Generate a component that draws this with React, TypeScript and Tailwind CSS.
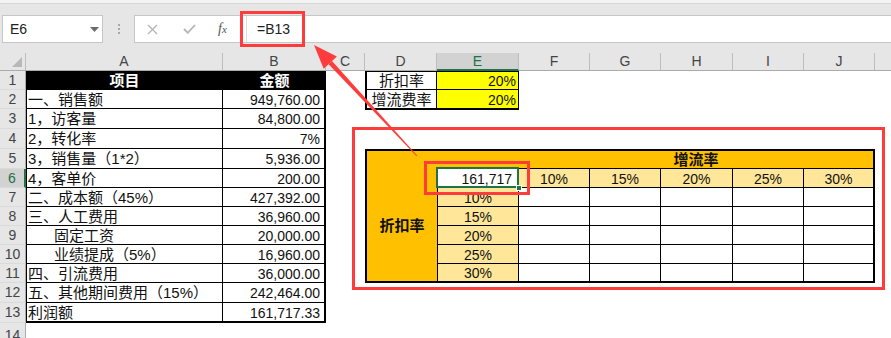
import React from "react";

const FONT = "font-['Liberation_Sans','Noto_Sans_CJK_SC',sans-serif]";

const COLS = ["A", "B", "C", "D", "E", "F", "G", "H", "I", "J"];
const COL_W = ["w-[197px]", "w-[103px]", "w-[39px]", "w-[72px]", "w-[82px]", "w-[71px]", "w-[71px]", "w-[72px]", "w-[71px]", "w-[71px]"];
// row 1..13 heights, row 14 takes the rest
const ROW_H = ["h-[19px]", "h-[19px]", "h-[20px]", "h-[20px]", "h-[20px]", "h-[19px]", "h-[19px]", "h-[19px]", "h-[19px]", "h-[19px]", "h-[19px]", "h-[20px]", "h-[20px]"];

const REPORT: { label: string; value: string; indent?: boolean }[] = [
  { label: "一、销售额", value: "949,760.00" },
  { label: "1，访客量", value: "84,800.00" },
  { label: "2，转化率", value: "7%" },
  { label: "3，销售量（1*2）", value: "5,936.00" },
  { label: "4，客单价", value: "200.00" },
  { label: "二、成本额（45%）", value: "427,392.00" },
  { label: "三、人工费用", value: "36,960.00" },
  { label: "固定工资", value: "20,000.00", indent: true },
  { label: "业绩提成（5%）", value: "16,960.00", indent: true },
  { label: "四、引流费用", value: "36,000.00" },
  { label: "五、其他期间费用（15%）", value: "242,464.00" },
  { label: "利润额", value: "161,717.33" },
];

const RATES = ["10%", "15%", "20%", "25%", "30%"];

function Toolbar() {
  return (
    <div className="h-[53px] bg-[#e6e6e6]">
      <div className="h-[4px] border-b border-[#d6d6d6] bg-[#f3f3f3]" />
      <div className="flex pt-[11px]">
        {/* name box */}
        <div className="ml-[2px] flex h-[28px] w-[101px] items-center justify-between border border-[#c6c6c6] bg-white pl-[7px] pr-[3px] text-[14px] text-[#222]">
          <span>E6</span>
          <svg width="9" height="5" viewBox="0 0 9 5">
            <polygon points="0,0 9,0 4.5,5" fill="#6b6b6b" />
          </svg>
        </div>
        <div className="ml-[14px] flex h-[28px] w-[3px] flex-col items-center justify-center gap-[2px]">
          <span className="h-[2px] w-[2px] bg-[#a8a8a8]" />
          <span className="h-[2px] w-[2px] bg-[#a8a8a8]" />
          <span className="h-[2px] w-[2px] bg-[#a8a8a8]" />
        </div>
        {/* formula bar */}
        <div className="ml-[14px] flex h-[28px] flex-1 border-y border-l border-[#c6c6c6] bg-white">
          <div className="flex w-[112px] items-center border-r border-[#dcdcdc]">
            <svg className="ml-[12px]" width="11" height="11" viewBox="0 0 11 11">
              <path d="M1 1 L10 10 M10 1 L1 10" stroke="#b4b4b4" strokeWidth="1.3" fill="none" />
            </svg>
            <svg className="ml-[25px]" width="13" height="10" viewBox="0 0 13 10">
              <path d="M1 5 L4.8 8.8 L12 1" stroke="#b4b4b4" strokeWidth="1.8" fill="none" />
            </svg>
            <span className="ml-[22px] font-['Liberation_Serif',serif] text-[14px] italic leading-none text-[#555]">
              f<span className="text-[11px]">x</span>
            </span>
          </div>
          <div className="flex items-center pl-[10px] text-[14px] text-[#222]">=B13</div>
        </div>
      </div>
    </div>
  );
}

function ColumnHeader() {
  return (
    <div className="flex h-[18px] border-b border-[#ababab] bg-[#e6e6e6] text-[14px] text-[#444]">
      <div className="relative w-[26px] border-r border-[#bdbdbd]">
        <svg className="absolute bottom-[3px] right-[3px]" width="10" height="10" viewBox="0 0 10 10">
          <polygon points="10,0 10,10 0,10" fill="#b8b8b8" />
        </svg>
      </div>
      {COLS.map((c, i) =>
        c === "E" ? (
          <div key={c} className={`${COL_W[i]} -mb-px flex items-center justify-center border-r border-b-2 border-r-[#bdbdbd] border-b-[#217346] bg-[#d2d2d2] text-[#217346]`}>
            {c}
          </div>
        ) : (
          <div key={c} className={`${COL_W[i]} flex items-center justify-center border-r border-[#bdbdbd]`}>
            {c}
          </div>
        )
      )}
      <div className="flex-1" />
    </div>
  );
}

function RowHeaders() {
  return (
    <div className="flex w-[26px] flex-col text-[14px] text-[#444]">
      {ROW_H.map((h, i) =>
        i === 5 ? (
          <div key={i} className={`${h} flex items-center justify-center border-b border-r-2 border-b-[#dadada] border-r-[#217346] bg-[#d2d2d2] text-[#217346]`}>
            {i + 1}
          </div>
        ) : (
          <div key={i} className={`${h} flex items-center justify-center border-b border-r border-b-[#dadada] border-r-[#ababab] bg-[#e6e6e6]`}>
            {i + 1}
          </div>
        )
      )}
      <div className="flex flex-1 justify-center border-r border-[#ababab] bg-[#e6e6e6] pt-[2px]">14</div>
    </div>
  );
}

function ReportTable() {
  return (
    <div className="col-span-2 col-start-1 row-span-13 row-start-1 grid grid-cols-[197px_103px] grid-rows-[19px_19px_20px_20px_20px_19px_19px_19px_19px_19px_19px_20px_20px]">
      <div className="flex items-center justify-center bg-black pt-[2px] text-[15px] font-bold text-white">项目</div>
      <div className="flex items-center justify-center bg-black pt-[2px] text-[15px] font-bold text-white">金额</div>
      {REPORT.map((r, i) => {
        const last = i === REPORT.length - 1;
        return (
          <React.Fragment key={r.label}>
            <div
              className={`flex items-center border-l border-r border-black pt-[2px] text-[15px] text-[#111] ${last ? "border-b-2" : "border-b"} ${
                r.indent ? "pl-[27px]" : "pl-[1px]"
              }`}
            >
              {r.label}
            </div>
            <div className={`flex items-center justify-end border-r-2 border-black pr-[4px] pt-[2px] text-[14px] text-[#111] ${last ? "border-b-2" : "border-b"}`}>
              {r.value}
            </div>
          </React.Fragment>
        );
      })}
    </div>
  );
}

function RateTable() {
  return (
    <div className="col-span-2 col-start-4 row-span-2 row-start-1 grid grid-cols-[72px_82px] grid-rows-[19px_20px] text-[#111]">
      <div className="flex items-center justify-center border-l-2 border-r border-t border-b border-black pt-[2px] text-[15px]">折扣率</div>
      <div className="flex items-center justify-end border-r border-t border-b border-black bg-[#ffff00] pr-[2px] pt-[2px] text-[14px]">20%</div>
      <div className="flex items-center justify-center border-b-2 border-l-2 border-r border-black pt-[2px] text-[15px]">增流费率</div>
      <div className="flex items-center justify-end border-b-2 border-r border-black bg-[#ffff00] pr-[2px] pt-[2px] text-[14px]">20%</div>
    </div>
  );
}

function SensitivityTable() {
  return (
    <div className="col-span-7 col-start-4 row-span-7 row-start-5 grid grid-cols-[70px_82px_71px_71px_72px_71px_69px] grid-rows-[18px_19px_19px_19px_19px_19px_17px] border-2 border-black text-[14px] text-[#111]">
      <div className="col-start-1 row-span-7 row-start-1 flex items-center justify-center bg-[#ffc000] pt-[20px] text-[15px] font-bold">折扣率</div>
      <div className="col-span-6 col-start-2 row-start-1 flex items-center justify-center border-b border-black bg-[#ffc000] pl-[82px] pt-[1px] text-[15px] font-bold">
        增流率
      </div>
      {/* row 6 */}
      <div className="relative col-start-2 row-start-2 flex items-center justify-end border-b border-l border-r border-black bg-white pr-[6px] pt-[2px]">
        161,717
        <div className="absolute -bottom-px -left-[2px] -right-px -top-[2px] border-2 border-[#217346]" />
        <div className="absolute -bottom-[4px] -right-[4px] h-[6px] w-[6px] border border-white bg-[#217346]" />
      </div>
      {RATES.map((r, i) => (
        <div key={r} className={`row-start-2 flex items-center justify-center border-b border-black bg-[#ffe699] pt-[2px] ${i < 4 ? "border-r" : ""}`}>
          {r}
        </div>
      ))}
      {/* rows 7-11 */}
      {RATES.map((r, ri) => (
        <React.Fragment key={r}>
          <div className={`col-start-2 flex items-center justify-center border-l border-r border-black bg-[#ffe699] pt-[2px] ${ri < 4 ? "border-b" : ""}`}>{r}</div>
          {[0, 1, 2, 3, 4].map((c) => (
            <div key={c} className={`border-black ${ri < 4 ? "border-b" : ""} ${c < 4 ? "border-r" : ""}`} />
          ))}
        </React.Fragment>
      ))}
    </div>
  );
}

function Overlays() {
  return (
    <>
      <div className="absolute left-[240px] top-[11px] h-[36px] w-[65px] border-[3px] border-[#ff3c3c]" />
      <div className="absolute left-[352px] top-[127px] h-[163px] w-[533px] border-[3px] border-[#ff3c3c]" />
      <div className="absolute left-[424px] top-[161px] h-[34px] w-[106px] border-[3px] border-[#ff3c3c]" />
      <svg className="pointer-events-none absolute left-0 top-0" width="891" height="338" viewBox="0 0 891 338">
        <polygon points="314,45 323.7,68.7 336.9,56.5" fill="#ff3c3c" />
        <polygon points="328.6,64.2 332,61 417.4,155.7 416.6,156.3" fill="#ff3c3c" />
      </svg>
    </>
  );
}

export default function App() {
  return (
    <div className={`relative h-[338px] w-[891px] overflow-hidden bg-white ${FONT}`}>
      <Toolbar />
      <ColumnHeader />
      <div className="flex h-[267px]">
        <RowHeaders />
        <div className="grid flex-1 grid-cols-[197px_103px_39px_72px_82px_71px_71px_72px_71px_71px_1fr] grid-rows-[19px_19px_20px_20px_20px_19px_19px_19px_19px_19px_19px_20px_20px_1fr]">
          <ReportTable />
          <RateTable />
          <SensitivityTable />
        </div>
      </div>
      <Overlays />
    </div>
  );
}
